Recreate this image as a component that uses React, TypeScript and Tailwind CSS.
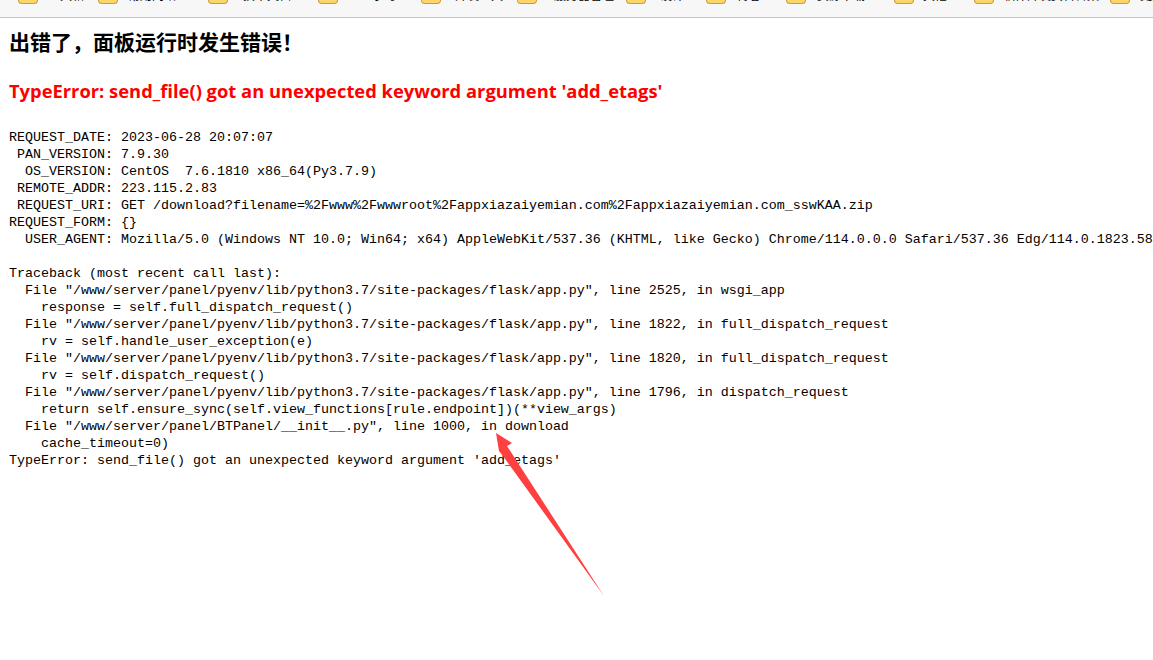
const info = `REQUEST_DATE: 2023-06-28 20:07:07
 PAN_VERSION: 7.9.30
  OS_VERSION: CentOS  7.6.1810 x86_64(Py3.7.9)
 REMOTE_ADDR: 223.115.2.83
 REQUEST_URI: GET /download?filename=%2Fwww%2Fwwwroot%2Fappxiazaiyemian.com%2Fappxiazaiyemian.com_sswKAA.zip
REQUEST_FORM: {}
  USER_AGENT: Mozilla/5.0 (Windows NT 10.0; Win64; x64) AppleWebKit/537.36 (KHTML, like Gecko) Chrome/114.0.0.0 Safari/537.36 Edg/114.0.1823.58

Traceback (most recent call last):
  File "/www/server/panel/pyenv/lib/python3.7/site-packages/flask/app.py", line 2525, in wsgi_app
    response = self.full_dispatch_request()
  File "/www/server/panel/pyenv/lib/python3.7/site-packages/flask/app.py", line 1822, in full_dispatch_request
    rv = self.handle_user_exception(e)
  File "/www/server/panel/pyenv/lib/python3.7/site-packages/flask/app.py", line 1820, in full_dispatch_request
    rv = self.dispatch_request()
  File "/www/server/panel/pyenv/lib/python3.7/site-packages/flask/app.py", line 1796, in dispatch_request
    return self.ensure_sync(self.view_functions[rule.endpoint])(**view_args)
  File "/www/server/panel/BTPanel/__init__.py", line 1000, in download
    cache_timeout=0)
TypeError: send_file() got an unexpected keyword argument 'add_etags'`

// the bookmarks bar is scrolled almost out of the shot, only the bottoms show
const bookmarks = [
  { width: 'w-[80px]', gap: 'ml-[10px]', label: '工具箱' },
  { width: 'w-[110px]', gap: 'ml-[10px]', label: '常用网站' },
  { width: 'w-[110px]', gap: 'ml-[15px]', label: '技术文档' },
  { width: 'w-[103px]', gap: 'ml-[34px]', label: '学习' },
  { width: 'w-[96px]', gap: 'ml-[14px]', label: '开发工具' },
  { width: 'w-[109px]', gap: 'ml-[17px]', label: '服务器管理' },
  { width: 'w-[80px]', gap: 'ml-[14px]', label: '设计' },
  { width: 'w-[80px]', gap: 'ml-[11px]', label: '博客' },
  { width: 'w-[108px]', gap: 'ml-[11px]', label: '资源下载' },
  { width: 'w-[80px]', gap: 'ml-[9px]', label: '其他' },
  { width: 'w-[136px]', gap: 'ml-[9px]', label: '软件开发资料合集' },
  { width: 'w-[43px]', gap: 'ml-[10px]', label: '更多' },
]

export default function App() {
  return (
    <div className="relative min-h-[660px] bg-white overflow-hidden">
      <div className="h-[18px] bg-[#f7f7f7] border-b border-[#c4c4c4] flex items-start pl-[18px] overflow-hidden">
        {bookmarks.map((b) => (
          <div key={b.label} className={`${b.width} shrink-0 flex items-start overflow-hidden`}>
            <span className="w-5 h-1 shrink-0 bg-[#fbd66c] border-x border-b border-[#c79f35] rounded-b-[4px]" />
            <span className={`${b.gap} -mt-[12px] text-xs leading-[14px] whitespace-nowrap text-black [font-family:'Noto_Sans_CJK_SC',sans-serif]`}>
              {b.label}
            </span>
          </div>
        ))}
      </div>
      <div className="px-[9px]">
        <h2 className="mt-[9px] text-[21px] leading-[28px] font-bold text-black [font-family:'Noto_Sans_CJK_SC','Noto_Sans',sans-serif]">
          {'出错了\uFF0C面板运行时发生错误\uFF01'}
        </h2>
        <h3 className="mt-[22px] text-[18.35px] leading-[28px] font-bold text-[#ff0000] [font-family:'Open_Sans','Noto_Sans',sans-serif]">
          TypeError: send_file() got an unexpected keyword argument 'add_etags'
        </h3>
        <pre className="mt-[24px] text-[13.33px] leading-[17px] text-black whitespace-pre [font-family:'Liberation_Mono',monospace]">
          {info}
        </pre>
      </div>
      {/* annotation arrow on top of the traceback */}
      <svg className="absolute left-0 top-0 pointer-events-none" width="1153" height="660" viewBox="0 0 1153 660">
        <polygon points="496,433 512,443 507,446 604,596 503,456 499,451" fill="#ff4040" />
      </svg>
    </div>
  )
}
